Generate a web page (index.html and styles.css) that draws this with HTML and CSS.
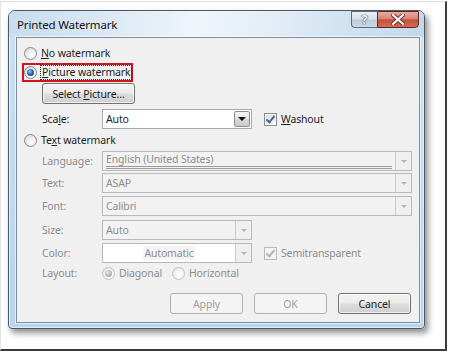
FILE: index.html
```html
<!DOCTYPE html>
<html>
<head>
    <title>Printed Watermark</title>
    <link rel="stylesheet" href="styles.css">
</head>
<body>
<div class="shot">
    <div class="dialog">
        <div class="title-bar">
            <span class="title">Printed Watermark</span>
            <div class="caption-buttons">
                <span class="help-btn">?</span>
                <span class="close-btn">
                    <svg width="14" height="11" viewBox="0 0 14 11">
                        <path d="M2 1 L12 10 M12 1 L2 10" stroke="#6b2a22" stroke-width="4" stroke-linecap="square"/>
                        <path d="M2 1 L12 10 M12 1 L2 10" stroke="#fff" stroke-width="2.2" stroke-linecap="square"/>
                    </svg>
                </span>
            </div>
        </div>
        <div class="client">
            <div class="radio-row first">
                <span class="radio"></span>
                <span class="text"><u>N</u>o watermark</span>
            </div>
            <div class="radio-row picked">
                <span class="radio checked"></span>
                <span class="text focus"><u>P</u>icture watermark</span>
            </div>
            <div class="indent">
                <span class="button select-btn"><span>Select <u>P</u>icture...</span></span>
            </div>
            <div class="field scale-row">
                <span class="label">Sca<u>l</u>e:</span>
                <div class="combo short">
                    <span class="combo-text">Auto</span>
                    <span class="combo-arrow dark"></span>
                </div>
                <span class="check checked"></span>
                <span class="check-label"><u>W</u>ashout</span>
            </div>
            <div class="radio-row text-wm">
                <span class="radio"></span>
                <span class="text">Te<u>x</u>t watermark</span>
            </div>
            <div class="field off lang-row">
                <span class="label">Language:</span>
                <div class="combo long">
                    <span class="combo-text"><span class="lang-value">English (United States)</span></span>
                    <span class="combo-arrow"></span>
                </div>
            </div>
            <div class="field off text-row">
                <span class="label">Text:</span>
                <div class="combo long">
                    <span class="combo-text">ASAP</span>
                    <span class="combo-arrow"></span>
                </div>
            </div>
            <div class="field off font-row">
                <span class="label">Font:</span>
                <div class="combo long">
                    <span class="combo-text">Calibri</span>
                    <span class="combo-arrow"></span>
                </div>
            </div>
            <div class="field off size-row">
                <span class="label">Size:</span>
                <div class="combo short">
                    <span class="combo-text">Auto</span>
                    <span class="combo-arrow"></span>
                </div>
            </div>
            <div class="field off color-row">
                <span class="label">Color:</span>
                <div class="combo short white">
                    <span class="combo-text centered"><span class="swatch">Automatic</span></span>
                    <span class="combo-arrow"></span>
                </div>
                <span class="check checked disabled"></span>
                <span class="check-label">Semitransparent</span>
            </div>
            <div class="field off layout-row">
                <span class="label">Layout:</span>
                <span class="radio checked disabled"></span>
                <span class="option">Diagonal</span>
                <span class="radio disabled"></span>
                <span class="option">Horizontal</span>
            </div>
            <div class="button-row">
                <span class="button disabled">Apply</span>
                <span class="button disabled">OK</span>
                <span class="button">Cancel</span>
            </div>
        </div>
    </div>
</div>
</body>
</html>
```

FILE: styles.css
```css
* {
    box-sizing: border-box;
}
body {
    margin: 0;
    padding: 0;
    background: #fff;
    font-family: "Noto Sans", "Open Sans", sans-serif;
    font-size: 10.5px;
    letter-spacing: -0.15px;
    color: #1e1e1e;
    white-space: nowrap;
}
u {
    text-decoration-thickness: 1px;
    text-underline-offset: 1px;
}
.shot {
    width: 447px;
    height: 350px;
    margin: 1px 0 0 0;
    padding: 8px 0 0 7px;
    border-top: 1px solid #dcdcdc;
    border-left: 1px solid #e4e4e4;
    border-right: 2px solid #3c3c3c;
    border-bottom: 2px solid #3c3c3c;
    background: #fff;
}
.dialog {
    width: 417px;
    height: 319px;
    padding: 0 4px 5px 7px;
    border: 1px solid #4b5866;
    border-radius: 7px 7px 4px 4px;
    background: linear-gradient(180deg, #cde1f1 0%, #c4dcef 40%, #b9d5ec 100%);
    box-shadow: 3px 4px 6px rgba(0, 0, 0, 0.45), inset 0 0 0 1px rgba(255, 255, 255, 0.55);
    display: flex;
    flex-direction: column;
}
.title-bar {
    height: 26px;
    display: flex;
    justify-content: space-between;
    align-items: flex-start;
    margin: 0 -4px 0 -7px;
    padding: 0 5px 0 8px;
    border-radius: 6px 6px 0 0;
    background: linear-gradient(100deg, #c8dcec 0%, #dce9f4 25%, #eef5fb 45%, #e6eff7 60%, #d2e3f1 80%, #c3d8ea 100%);
}
.title {
    font-size: 11.5px;
    line-height: 26px;
    margin-top: 1px;
    color: #111;
}
.caption-buttons {
    display: flex;
    height: 17px;
}
.help-btn {
    width: 26px;
    height: 17px;
    border: 1px solid #5f6e7e;
    border-right: none;
    border-radius: 0 0 0 4px;
    background: linear-gradient(180deg, #e9eff5 0%, #d7e0ea 48%, #bccad8 52%, #cdd9e5 100%);
    color: #f4f6f8;
    font-size: 13px;
    font-weight: bold;
    text-align: center;
    line-height: 15px;
    text-shadow: 0 0 1px #4d5866, 0 0 1px #4d5866, 0 0 1px #4d5866;
}
.close-btn {
    width: 42px;
    height: 17px;
    border: 1px solid #5a2b26;
    border-radius: 0 0 4px 0;
    background: linear-gradient(180deg, #e9a99c 0%, #d98473 45%, #c6503c 52%, #d26a52 100%);
    display: flex;
    align-items: center;
    justify-content: center;
}
.client {
    flex: 1;
    border: 1px solid #7d8e9f;
    background: #f0f0f0;
    padding: 6px 7px 0 7px;
    box-shadow: 0 0 0 1px rgba(255, 255, 255, 0.6);
}
.radio-row {
    display: flex;
    align-items: center;
    height: 18px;
}
.radio-row .text {
    margin-left: 4px;
}
.radio-row.picked {
    height: 19px;
    width: 111px;
    margin: 1px 0 0 -2px;
    border: 2px solid #d0141e;
}
.focus {
    outline: 1px dotted #333;
    line-height: 13px;
    padding: 0 1px;
}
.text-wm {
    margin-top: 2px;
}
.radio {
    width: 13px;
    height: 13px;
    flex: none;
    border-radius: 50%;
    border: 1px solid #8a8a8a;
    background: radial-gradient(circle at 60% 65%, #ffffff 0%, #f2f2f2 35%, #cfcfcf 100%);
    display: flex;
    align-items: center;
    justify-content: center;
}
.radio.checked::after {
    content: "";
    width: 7px;
    height: 7px;
    border-radius: 50%;
    background: radial-gradient(circle at 40% 35%, #9ec6ee 0%, #2f6cb5 45%, #0c2f66 100%);
}
.radio.disabled {
    border-color: #c2c2c2;
    background: radial-gradient(circle at 60% 65%, #ffffff 0%, #f4f4f4 40%, #e2e2e2 100%);
}
.radio.checked.disabled::after {
    background: radial-gradient(circle at 40% 35%, #e8e8e8 0%, #b5b5b5 60%, #9a9a9a 100%);
}
.indent {
    margin: 1px 0 0 18px;
}
.button {
    display: inline-flex;
    align-items: center;
    justify-content: center;
    height: 21px;
    border: 1px solid #707070;
    border-radius: 3px;
    background: linear-gradient(180deg, #f3f3f3 0%, #ebebeb 48%, #dddddd 52%, #cfcfcf 100%);
    box-shadow: inset 0 0 0 1px rgba(255, 255, 255, 0.7);
    color: #1e1e1e;
}
.button.disabled {
    border-color: #adb2b5;
    background: #f4f4f4;
    box-shadow: none;
    color: #a0a0a0;
}
.select-btn {
    width: 93px;
}
.field {
    display: flex;
    align-items: center;
    height: 20px;
    margin-left: 18px;
}
.field.off {
    color: #8d8d8d;
}
.label {
    width: 60px;
    flex: none;
}
.scale-row {
    margin-top: 5px;
}
.lang-row {
    margin-top: 2px;
}
.text-row {
    margin-top: 2px;
}
.font-row {
    margin-top: 3px;
}
.size-row {
    margin-top: 4px;
}
.color-row {
    margin-top: 3px;
}
.layout-row {
    margin-top: 1px;
    height: 18px;
}
.combo {
    display: flex;
    height: 20px;
    border: 1px solid #b9b9b9;
    background: #f2f2f2;
}
.combo.short {
    width: 150px;
}
.combo.long {
    width: 311px;
}
.scale-row .combo {
    border-color: #a5acb5;
    background: #fff;
}
.combo.white .combo-text {
    background: #fff;
}
.combo-text {
    flex: 1;
    display: flex;
    align-items: center;
    padding-left: 3px;
}
.combo-text.centered {
    justify-content: center;
    padding-left: 0;
}
.swatch {
    background: #f4f4f4;
    padding: 0 1px;
}
.lang-value {
    display: block;
    width: 286px;
    line-height: 13px;
    border-bottom: 3px double #9a9a9a;
}
.combo-arrow {
    width: 16px;
    flex: none;
    border-left: 1px solid #cacaca;
    background: #f0f0f0;
    display: flex;
    align-items: center;
    justify-content: center;
}
.combo-arrow::after {
    content: "";
    border-left: 3px solid transparent;
    border-right: 3px solid transparent;
    border-top: 3px solid #b4b4b4;
}
.combo-arrow.dark {
    margin: 1px;
    border: 1px solid #8a8e94;
    border-radius: 2px;
    background: linear-gradient(180deg, #f3f3f3 0%, #e6e6e6 48%, #d6d6d6 52%, #cacaca 100%);
}
.combo-arrow.dark::after {
    border-left-width: 4px;
    border-right-width: 4px;
    border-top: 4px solid #111;
}
.check {
    width: 13px;
    height: 13px;
    flex: none;
    margin-left: 12px;
    border: 1px solid #8e8f8f;
    background: linear-gradient(135deg, #dcdcdc 0%, #fbfbfb 100%);
    box-shadow: inset 0 0 0 1px #f4f4f4;
    position: relative;
}
.check.checked::after {
    content: "";
    position: absolute;
    left: 3px;
    top: 0;
    width: 3px;
    height: 7px;
    border-right: 2px solid #4c61a4;
    border-bottom: 2px solid #4c61a4;
    transform: rotate(40deg);
}
.check.disabled {
    border-color: #b9b9b9;
    background: #f4f4f4;
}
.check.disabled::after {
    border-color: #b4b4b4;
}
.check-label {
    margin-left: 4px;
}
.layout-row .radio {
    margin-right: 4px;
}
.layout-row .option {
    margin-right: 10px;
}
.button-row {
    display: flex;
    justify-content: flex-end;
    gap: 11px;
    margin: 11px 1px 0 0;
}
.button-row .button {
    width: 73px;
}
```
